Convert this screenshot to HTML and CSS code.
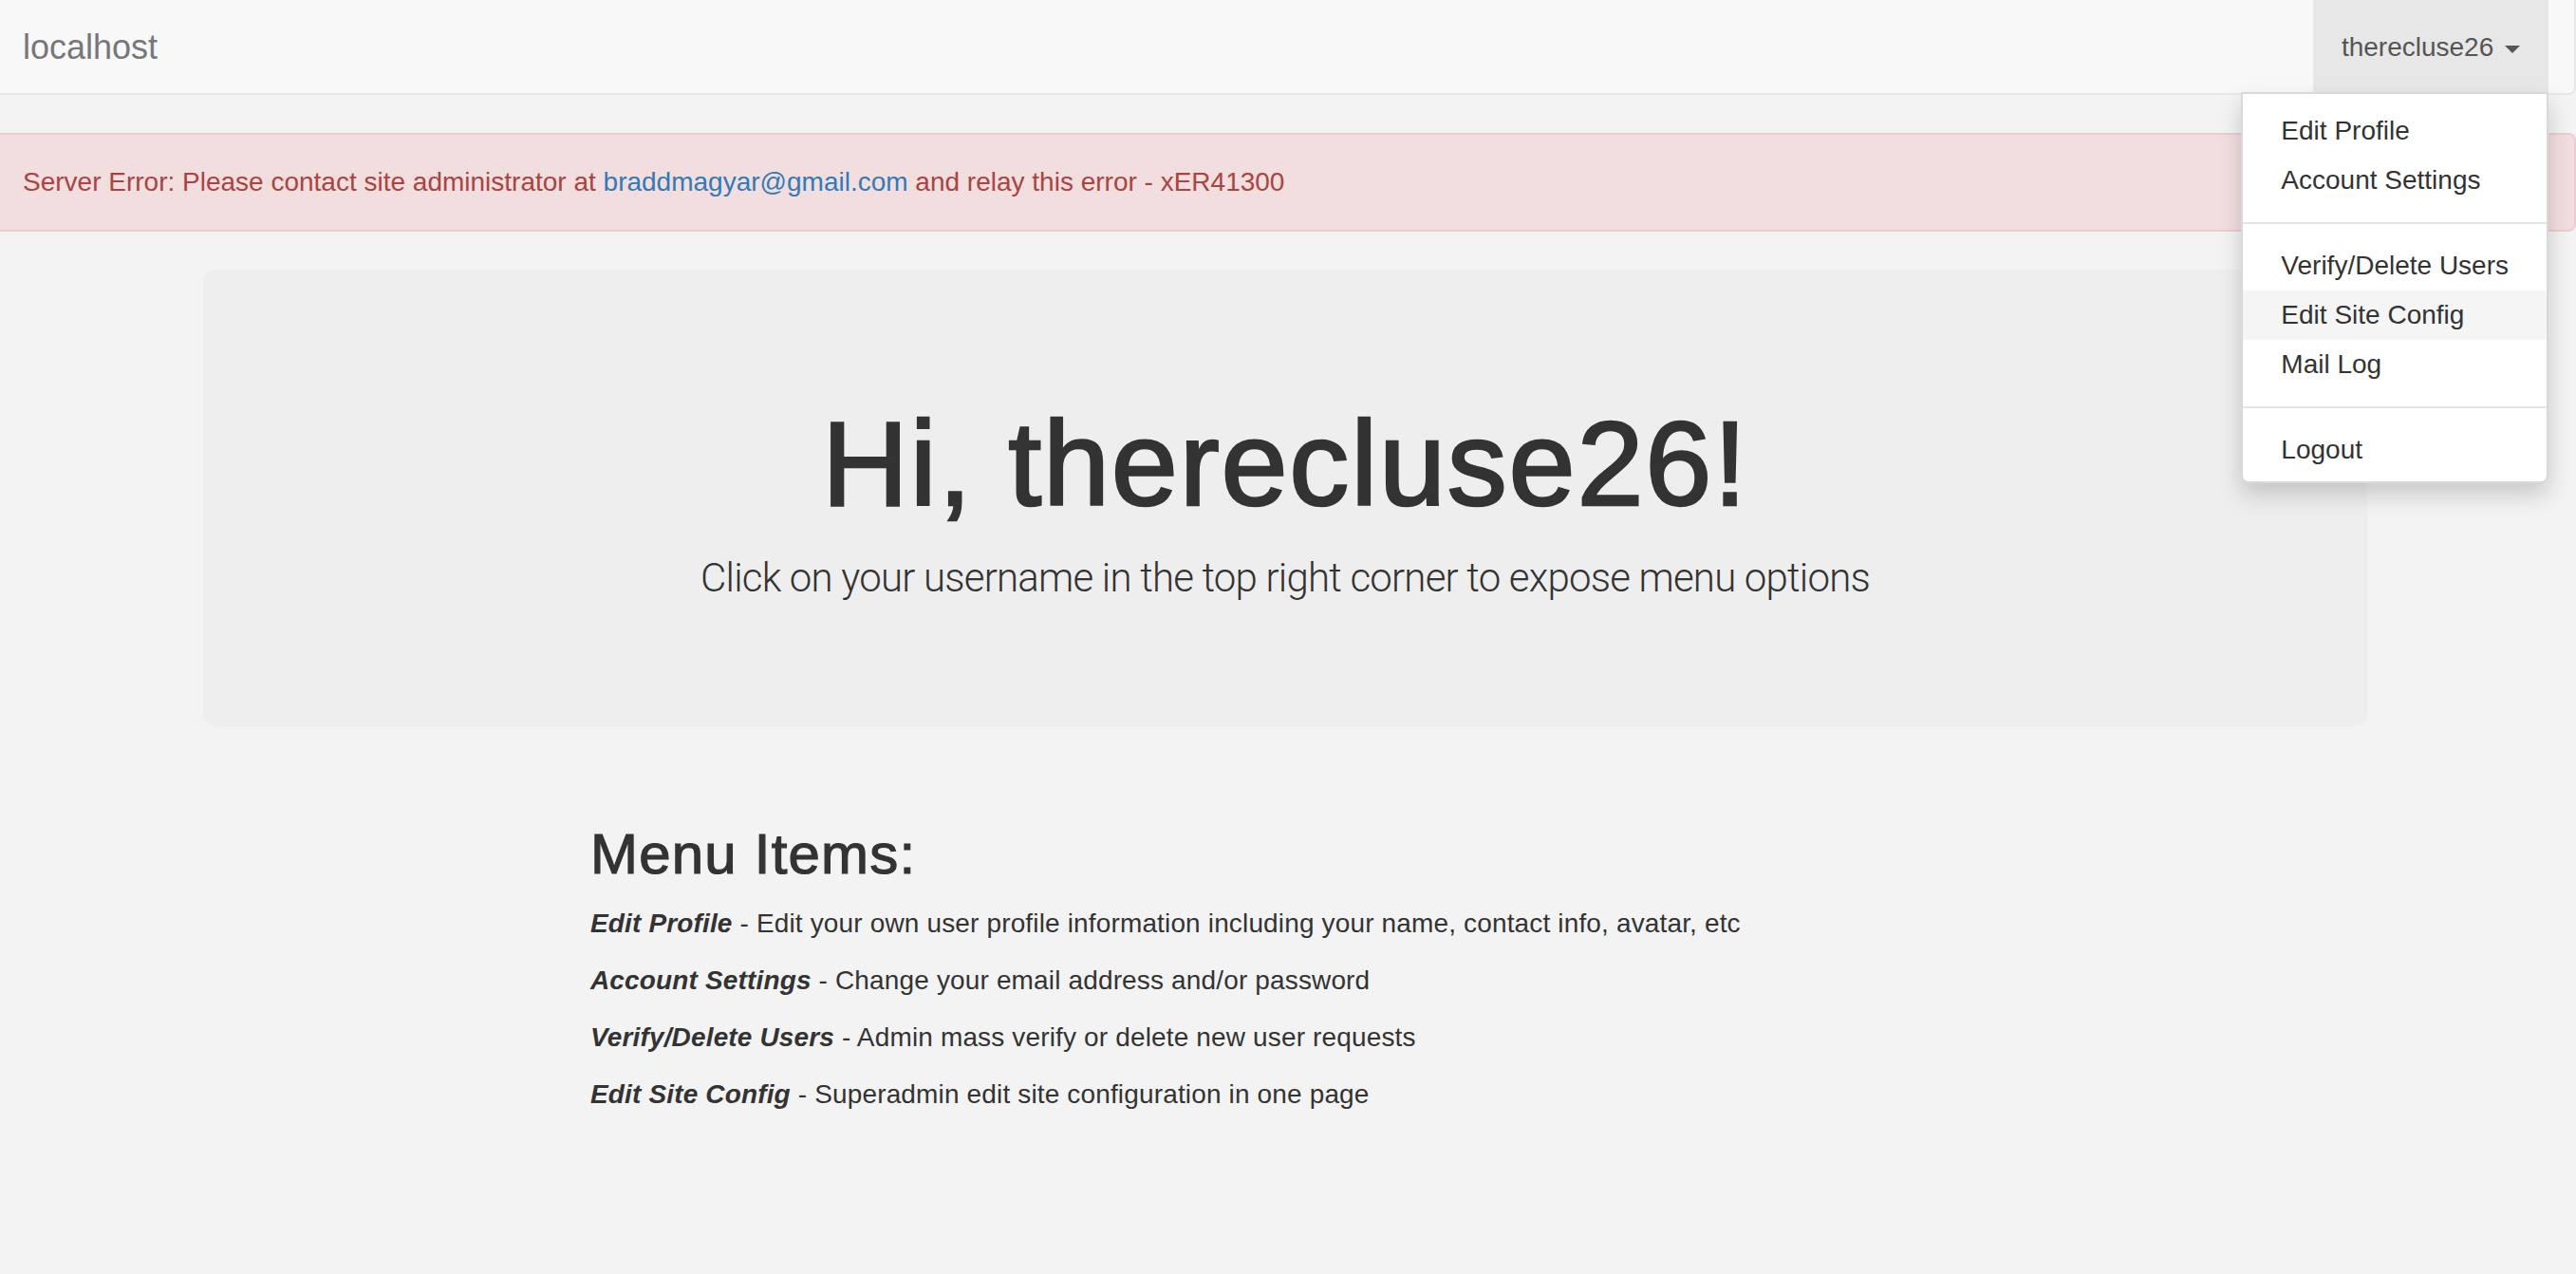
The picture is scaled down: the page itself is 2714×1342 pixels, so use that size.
FILE: index.html
```html
<!DOCTYPE html>
<html lang="en">
<head>
<meta charset="utf-8">
<title>localhost</title>
<link rel="stylesheet" href="styles.css">
</head>
<body>
<nav class="navbar">
  <a class="brand" href="#">localhost</a>
  <ul class="nav-right">
    <li class="dropdown">
      <a class="toggle" href="#">therecluse26 <span class="caret"></span></a>
      <ul class="dropdown-menu">
        <li><a href="#">Edit Profile</a></li>
        <li><a href="#">Account Settings</a></li>
        <li class="divider"></li>
        <li><a href="#">Verify/Delete Users</a></li>
        <li class="active"><a href="#">Edit Site Config</a></li>
        <li><a href="#">Mail Log</a></li>
        <li class="divider"></li>
        <li><a href="#">Logout</a></li>
      </ul>
    </li>
  </ul>
</nav>
<div class="alert">Server Error: Please contact site administrator at <a href="#">braddmagyar@gmail.com</a> and relay this error - xER41300</div>
<div class="container">
  <div class="jumbotron">
    <h1>Hi, therecluse26!</h1>
    <p>Click on your username in the top right corner to expose menu options</p>
  </div>
  <div class="menu-items">
    <h2>Menu Items:</h2>
    <p><strong><em>Edit Profile</em></strong> - Edit your own user profile information including your name, contact info, avatar, etc</p>
    <p><strong><em>Account Settings</em></strong> - Change your email address and/or password</p>
    <p><strong><em>Verify/Delete Users</em></strong> - Admin mass verify or delete new user requests</p>
    <p><strong><em>Edit Site Config</em></strong> - Superadmin edit site configuration in one page</p>
  </div>
</div>
</body>
</html>
```
FILE: styles.css
```css
* { box-sizing: border-box; }
html, body { margin: 0; padding: 0; }
body {
  background: #f3f3f3;
  color: #333;
  font-family: "Liberation Sans", Arial, sans-serif;
  font-size: 28px;
  line-height: 40px;
  min-height: 1342px;
}
a { text-decoration: none; }

.navbar {
  display: flex;
  justify-content: space-between;
  align-items: flex-start;
  height: 100px;
  background: #f8f8f8;
  border-style: solid;
  border-color: #e7e7e7;
  border-width: 0 2px 2px 0;
  border-radius: 0 0 8px 0;
  padding-right: 27px;
  margin-bottom: 40px;
}
.brand {
  color: #777;
  font-size: 36px;
  line-height: 40px;
  padding: 30px 0 0 24px;
}
.nav-right {
  list-style: none;
  margin: 0;
  padding: 0;
}
.dropdown { position: relative; }
.toggle {
  display: block;
  background: #e7e7e7;
  color: #555;
  height: 98px;
  padding: 30px 30px 0 30px;
  line-height: 40px;
  white-space: nowrap;
}
.caret {
  display: inline-block;
  width: 0;
  height: 0;
  margin-left: 4px;
  vertical-align: middle;
  border-top: 8px solid #555;
  border-left: 8px solid transparent;
  border-right: 8px solid transparent;
}
.dropdown-menu {
  position: absolute;
  top: 97px;
  right: 0;
  z-index: 10;
  min-width: 320px;
  margin: 0;
  padding: 13px 0 7px;
  list-style: none;
  background: #fff;
  border: 2px solid rgba(0,0,0,.15);
  border-radius: 0 0 8px 8px;
  box-shadow: 0 12px 24px rgba(0,0,0,.175);
}
.dropdown-menu a {
  display: block;
  padding: 6px 40px;
  line-height: 40px;
  color: #333;
  white-space: nowrap;
}
.dropdown-menu .active a { background: #f5f5f5; }
.dropdown-menu .divider {
  height: 2px;
  margin: 18px 0;
  background: #e5e5e5;
}

.alert {
  background: #f2dede;
  color: #a94442;
  border: 2px solid #ebccd1;
  border-left: 0;
  border-radius: 0 8px 8px 0;
  padding: 30px 30px 30px 24px;
  margin-bottom: 40px;
}
.alert a { color: #337ab7; }

.container {
  width: 2340px;
  margin-left: calc(50% - 1173px);
  padding: 0 30px;
}
.jumbotron {
  background: #eee;
  border-radius: 12px;
  padding: 96px 120px;
  margin-bottom: 60px;
  text-align: center;
}
.jumbotron h1 {
  margin: 40px 0 20px;
  font-size: 126px;
  line-height: 1.1;
  font-weight: 400;
  letter-spacing: 1.8px;
  -webkit-text-stroke: 2.5px #333;
}
.jumbotron p {
  margin: 0 0 30px;
  font-family: Roboto, "Liberation Sans", sans-serif;
  font-size: 42px;
  line-height: 60px;
  font-weight: 300;
  letter-spacing: -0.8px;
}
.menu-items { padding-left: 408px; }
.menu-items h2 {
  margin: 102px 0 20px;
  font-size: 60px;
  line-height: 1.1;
  font-weight: 400;
  letter-spacing: 1.2px;
  -webkit-text-stroke: 1.2px #333;
}
.menu-items p { margin: 0 0 20px; letter-spacing: 0.15px; }
```
